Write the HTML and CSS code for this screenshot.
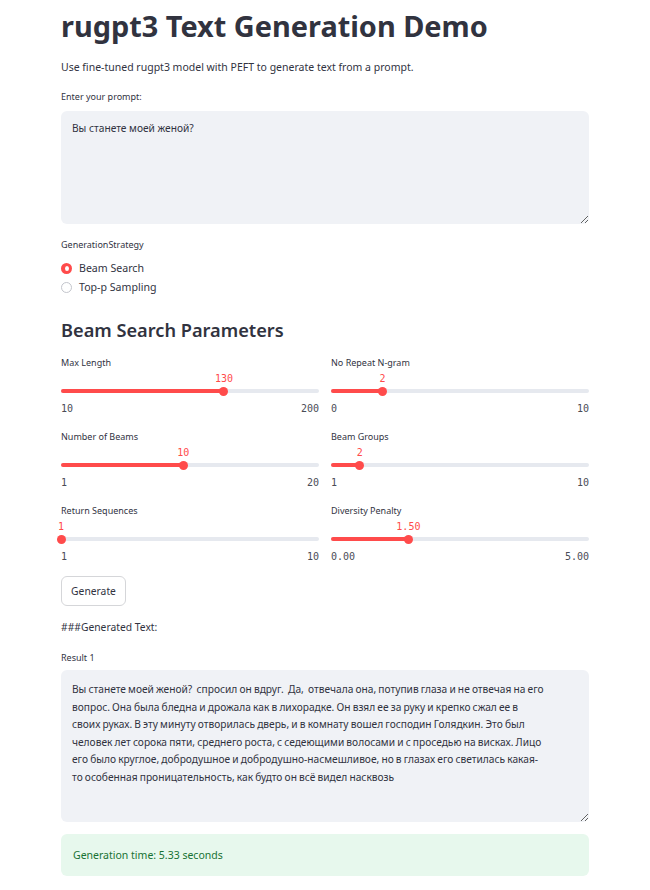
FILE: index.html
```html
<!DOCTYPE html>
<html lang="en">
<head>
<meta charset="utf-8">
<title>rugpt3 Text Generation Demo</title>
<link rel="stylesheet" href="styles.css">
</head>
<body>
<main class="main">
  <h1 class="title">rugpt3 Text Generation Demo</h1>
  <p class="subtitle">Use fine-tuned rugpt3 model with PEFT to generate text from a prompt.</p>

  <div class="widget-label label-prompt">Enter your prompt:</div>
  <textarea class="textarea prompt" readonly>Вы станете моей женой?</textarea>

  <div class="widget-label label-strategy">GenerationStrategy</div>
  <div class="radio-group">
    <div class="radio-row"><span class="radio checked"></span><span class="radio-text">Beam Search</span></div>
    <div class="radio-row"><span class="radio"></span><span class="radio-text">Top-p Sampling</span></div>
  </div>

  <h3 class="section-title">Beam Search Parameters</h3>

  <div class="slider-grid">
    <div class="slider">
      <div class="widget-label">Max Length</div>
      <div class="track"><div class="fill" style="width:63.16%"></div><div class="thumb" style="left:63.16%"><span class="thumb-value">130</span></div></div>
      <div class="minmax"><span>10</span><span>200</span></div>
    </div>
    <div class="slider">
      <div class="widget-label">No Repeat N-gram</div>
      <div class="track"><div class="fill" style="width:20%"></div><div class="thumb" style="left:20%"><span class="thumb-value">2</span></div></div>
      <div class="minmax"><span>0</span><span>10</span></div>
    </div>
    <div class="slider">
      <div class="widget-label">Number of Beams</div>
      <div class="track"><div class="fill" style="width:47.37%"></div><div class="thumb" style="left:47.37%"><span class="thumb-value">10</span></div></div>
      <div class="minmax"><span>1</span><span>20</span></div>
    </div>
    <div class="slider">
      <div class="widget-label">Beam Groups</div>
      <div class="track"><div class="fill" style="width:11.11%"></div><div class="thumb" style="left:11.11%"><span class="thumb-value">2</span></div></div>
      <div class="minmax"><span>1</span><span>10</span></div>
    </div>
    <div class="slider">
      <div class="widget-label">Return Sequences</div>
      <div class="track"><div class="fill" style="width:0%"></div><div class="thumb" style="left:0%"><span class="thumb-value">1</span></div></div>
      <div class="minmax"><span>1</span><span>10</span></div>
    </div>
    <div class="slider">
      <div class="widget-label">Diversity Penalty</div>
      <div class="track"><div class="fill" style="width:30%"></div><div class="thumb" style="left:30%"><span class="thumb-value">1.50</span></div></div>
      <div class="minmax"><span>0.00</span><span>5.00</span></div>
    </div>
  </div>

  <button class="button" type="button">Generate</button>

  <p class="generated">###Generated Text:</p>

  <div class="widget-label label-result">Result 1</div>
  <textarea class="textarea result" readonly>Вы станете моей женой?  спросил он вдруг.  Да,  отвечала она, потупив глаза и не отвечая на его вопрос. Она была бледна и дрожала как в лихорадке. Он взял ее за руку и крепко сжал ее в своих руках. В эту минуту отворилась дверь, и в комнату вошел господин Голядкин. Это был человек лет сорока пяти, среднего роста, с седеющими волосами и с проседью на висках. Лицо его было круглое, добродушное и добродушно-насмешливое, но в глазах его светилась какая-то особенная проницательность, как будто он всё видел насквозь</textarea>

  <div class="success">Generation time: 5.33 seconds</div>
</main>
</body>
</html>
```

FILE: styles.css
```css
* { box-sizing: border-box; }

html, body {
  margin: 0;
  padding: 0;
  background: #ffffff;
}

body {
  font-family: "Noto Sans", "Open Sans", sans-serif;
  color: #31333f;
}

.main {
  width: 528px;
  margin: 0 auto;
  padding-top: 6px;
  display: flex;
  flex-direction: column;
  align-items: stretch;
}

.title {
  margin: 0;
  font-size: 28.9px;
  line-height: 40px;
  font-weight: 700;
  color: #31333f;
}

.subtitle {
  margin: 12px 0 0;
  font-size: 10.5px;
  line-height: 18px;
}

.widget-label {
  font-size: 9px;
  line-height: 16px;
  height: 16px;
  color: #31333f;
}

.label-prompt { margin-top: 13px; }

.textarea {
  display: block;
  width: 100%;
  border: none;
  outline: none;
  background: #f0f2f6;
  border-radius: 6px;
  font-family: "Noto Sans", "Open Sans", sans-serif;
  font-size: 10.2px;
  line-height: 17.6px;
  color: #31333f;
  padding: 9px 11px;
  resize: vertical;
  overflow: hidden;
  margin: 0;
}

.prompt {
  margin-top: 6px;
  height: 113px;
}

.label-strategy { margin-top: 13px; }

.radio-group {
  margin-top: 6px;
  display: flex;
  flex-direction: column;
}

.radio-row {
  height: 19px;
  display: flex;
  align-items: center;
  gap: 7px;
}

.radio {
  width: 11px;
  height: 11px;
  border-radius: 50%;
  border: 1px solid #c3c5cc;
  background: #fff;
  position: relative;
  flex: none;
}

.radio.checked {
  border: none;
  background: #ff4b4b;
}

.radio.checked::after {
  content: "";
  position: absolute;
  left: 3.5px;
  top: 3px;
  width: 4px;
  height: 5px;
  border-radius: 50%;
  background: #fff;
}

.radio-text {
  font-size: 10.6px;
  line-height: 19px;
}

.section-title {
  margin: 21px 0 0;
  font-size: 18.2px;
  line-height: 24px;
  font-weight: 600;
  color: #31333f;
}

.slider-grid {
  margin-top: 13px;
  display: grid;
  grid-template-columns: 1fr 1fr;
  column-gap: 12px;
  row-gap: 4px;
}

.slider {
  height: 70px;
  display: flex;
  flex-direction: column;
}

.track {
  position: relative;
  margin-top: 18px;
  height: 4px;
  border-radius: 2px;
  background: #e6e9ef;
}

.fill {
  position: absolute;
  left: 0;
  top: 0;
  height: 4px;
  border-radius: 2px;
  background: #ff4b4b;
}

.thumb {
  position: absolute;
  top: 2px;
  width: 9px;
  height: 9px;
  margin-left: -4.5px;
  margin-top: -4.5px;
  border-radius: 50%;
  background: #ff4b4b;
}

.thumb-value {
  position: absolute;
  left: 50%;
  bottom: 11px;
  transform: translateX(-50%);
  font-family: "DejaVu Sans Mono", "Liberation Mono", monospace;
  font-size: 10px;
  line-height: 12px;
  color: #ff4b4b;
  white-space: nowrap;
}

.minmax {
  margin-top: 10px;
  display: flex;
  justify-content: space-between;
  font-family: "DejaVu Sans Mono", "Liberation Mono", monospace;
  font-size: 10px;
  line-height: 12px;
  color: #4a4c57;
}

.button {
  margin-top: 3px;
  align-self: flex-start;
  height: 30px;
  width: 65px;
  padding: 0;
  border: 1px solid #d5d6d9;
  border-radius: 6px;
  background: #fff;
  font-family: "Noto Sans", "Open Sans", sans-serif;
  font-size: 10.3px;
  color: #31333f;
}

.generated {
  margin: 12px 0 0;
  font-size: 10.3px;
  line-height: 18px;
}

.label-result { margin-top: 14px; }

.result {
  margin-top: 4px;
  height: 152px;
  padding-top: 11px;
  padding-right: 42.7px;
  word-spacing: -0.5px;
}

.success {
  margin-top: 12px;
  height: 42px;
  border-radius: 6px;
  background: #e7f8ed;
  color: #177233;
  font-size: 10.5px;
  line-height: 42px;
  padding-left: 12px;
}
```
